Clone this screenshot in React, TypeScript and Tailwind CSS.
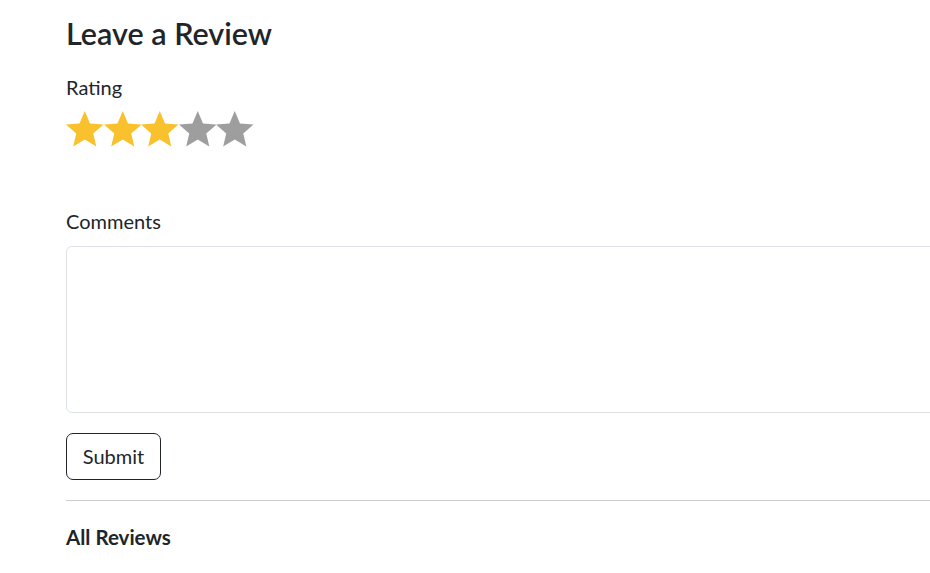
const STAR_PATH = 'M12 17.27L18.18 21l-1.64-7.03L22 9.24l-7.19-.61L12 2 9.19 8.63 2 9.24l5.46 4.73L5.82 21z';

function Star({ filled }: { filled: boolean }) {
  return (
    <svg viewBox="2 2 20 19" className="block h-[35.6px] w-[37.5px]" fill={filled ? '#f9c12d' : '#9e9e9e'}>
      <path d={STAR_PATH} />
    </svg>
  );
}

export default function App() {
  const rating = 3;

  return (
    <div className="min-h-screen overflow-hidden bg-white font-['Lato',sans-serif] text-[#212529]">
      <div className="w-[1000px] pl-[66px] pt-[14px]">
        <h2 className="text-[30.5px] font-semibold leading-[38px]">Leave a Review</h2>

        <p className="mt-[20px] text-[20px] leading-[30px]">Rating</p>
        <div className="mt-[9px] flex">
          {[1, 2, 3, 4, 5].map((n) => (
            <Star key={n} filled={n <= rating} />
          ))}
        </div>

        <label className="mt-[59px] block text-[20px] leading-[30px]">Comments</label>
        <textarea className="mt-[10px] block h-[167px] w-full resize-none rounded-[6px] border border-[#dee2e6] px-3 py-2 text-[20px] outline-none" />

        <button className="mt-[20px] h-[47px] w-[95px] rounded-[7px] border border-[#212529] text-[20px]">
          Submit
        </button>

        <hr className="mt-[20px] border-t border-[#cccccc]" />

        <h5 className="mt-[24px] text-[20.5px] font-bold leading-[1.2]">All Reviews</h5>
      </div>
    </div>
  );
}
